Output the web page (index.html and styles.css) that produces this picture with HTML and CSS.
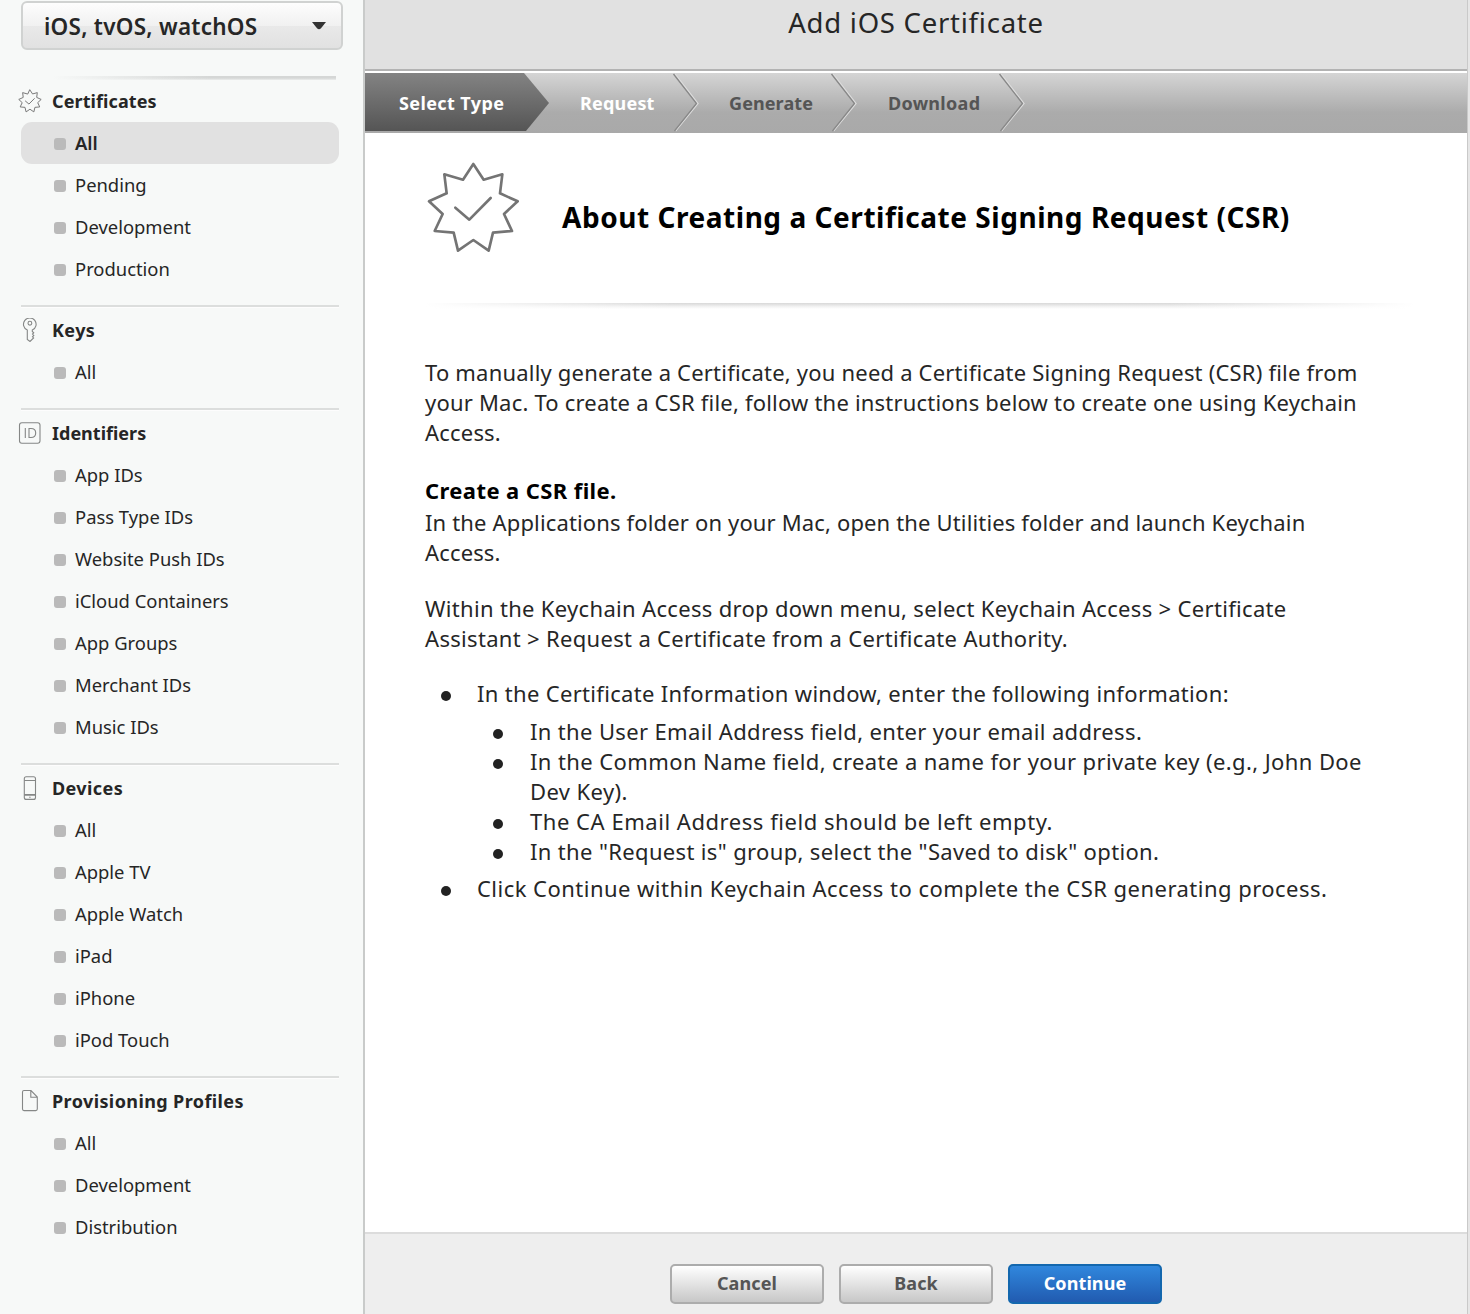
FILE: index.html
```
<!DOCTYPE html>
<html lang="en">
<head>
<meta charset="utf-8">
<title>Add iOS Certificate</title>
<link rel="stylesheet" href="styles.css">
</head>
<body>
<svg class="defs" aria-hidden="true">
  <symbol id="seal" viewBox="48 36 285 273">
    <path class="seal-line" d="M190 42L221 89L277 73L270 130L323 154L282 192L306 243L249 248L236 302L190 270L144 302L131 248L74 243L98 192L57 154L110 130L103 73L159 89Z"/>
    <path class="seal-line" d="M136 173L178 209L242 144"/>
  </symbol>
</svg>
<div class="page">
  <aside class="sidebar">
    <div class="platform"><span class="platform-name">iOS, tvOS, watchOS</span><svg class="caret" viewBox="0 0 14 8"><path d="M0 0H14L9 6.2Q7 8.2 5 6.2Z"/></svg></div>
    <div class="fade-rule"></div>
    <section class="group">
      <h3><svg class="icon seal-small"><use href="#seal"/></svg><span>Certificates</span></h3>
      <ul><li class="selected"><span>All</span></li><li><span>Pending</span></li><li><span>Development</span></li><li><span>Production</span></li></ul>
    </section>
    <section class="group">
      <h3><svg class="icon" viewBox="0 0 24 24"><path d="M9.3 12.1A6.3 6.3 0 1 1 14.3 12.1V13.5L15.7 14.8L14.5 16.1L15.8 17.4L14.5 18.8L15.6 20L12 23.5L9.3 21.5Z"/><circle cx="11.9" cy="5.2" r="1.9"/></svg><span class="wide">Keys</span></h3>
      <ul><li><span>All</span></li></ul>
    </section>
    <section class="group">
      <h3><svg class="icon" viewBox="0 0 24 24"><rect x="1.5" y="1.7" width="20.5" height="20.5" rx="2.4"/><path d="M7.3 7V17M11 7.5V16.5H13Q17.7 16.5 17.7 12Q17.7 7.5 13 7.5Z"/></svg><span class="tight">Identifiers</span></h3>
      <ul><li><span>App IDs</span></li><li><span>Pass Type IDs</span></li><li><span>Website Push IDs</span></li><li><span>iCloud Containers</span></li><li><span>App Groups</span></li><li><span>Merchant IDs</span></li><li><span>Music IDs</span></li></ul>
    </section>
    <section class="group">
      <h3><svg class="icon" viewBox="0 0 24 24"><rect x="6.3" y=".7" width="11.2" height="22.7" rx="2"/><path d="M6.3 4.5H17.5M6.3 18.5H17.5M6.3 19.2H17.5"/><circle class="dot" cx="11.9" cy="21.3" r=".8"/></svg><span class="wide">Devices</span></h3>
      <ul><li><span>All</span></li><li><span>Apple TV</span></li><li><span>Apple Watch</span></li><li><span>iPad</span></li><li><span>iPhone</span></li><li><span>iPod Touch</span></li></ul>
    </section>
    <section class="group">
      <h3><svg class="icon" viewBox="0 0 24 24"><path d="M6 1.5H13L19.3 8V20Q19.3 21.6 17.7 21.6H6Q4.5 21.6 4.5 20V3Q4.5 1.5 6 1.5ZM12.8 1.5V8.2H19.3"/></svg><span class="wide">Provisioning Profiles</span></h3>
      <ul><li><span>All</span></li><li><span>Development</span></li><li><span>Distribution</span></li></ul>
    </section>
  </aside>
  <main class="main">
    <header class="title"><span>Add iOS Certificate</span></header>
    <nav class="steps">
      <div class="step s1"><span>Select Type</span></div>
      <div class="step s2"><span>Request</span><svg class="chev" viewBox="0 0 28 60"><path class="lite" d="M4 1L27 30.5L4.5 58"/><path class="dark" d="M2.5 1L25.5 30.5L3.5 58"/></svg></div>
      <div class="step s3"><span>Generate</span><svg class="chev" viewBox="0 0 28 60"><path class="lite" d="M4 1L27 30.5L4.5 58"/><path class="dark" d="M2.5 1L25.5 30.5L3.5 58"/></svg></div>
      <div class="step s4"><span>Download</span><svg class="chev" viewBox="0 0 28 60"><path class="lite" d="M4 1L27 30.5L4.5 58"/><path class="dark" d="M2.5 1L25.5 30.5L3.5 58"/></svg></div>
    </nav>
    <article class="content">
      <div class="about"><svg class="seal-big"><use href="#seal"/></svg><h1>About Creating a Certificate Signing Request (CSR)</h1></div>
      <div class="rule"></div>
      <p class="t20">To manually generate a Certificate, you need a Certificate Signing Request (CSR) file from<br>your Mac. To create a CSR file, follow the instructions below to create one using Keychain<br>Access.</p>
      <h2>Create a CSR file.</h2>
      <p class="after-head t15">In the Applications folder on your Mac, open the Utilities folder and launch Keychain<br>Access.</p>
      <p class="menu-path t30">Within the Keychain Access drop down menu, select Keychain Access &gt; Certificate<br>Assistant &gt; Request a Certificate from a Certificate Authority.</p>
      <ul class="outer">
        <li><span class="t30">In the Certificate Information window, enter the following information:</span>
          <ul class="inner">
            <li class="t35">In the User Email Address field, enter your email address.</li>
            <li class="t40">In the Common Name field, create a name for your private key (e.g., John Doe<br>Dev Key).</li>
            <li class="t50">The CA Email Address field should be left empty.</li>
            <li class="t35">In the "Request is" group, select the "Saved to disk" option.</li>
          </ul>
        </li>
        <li class="t45">Click Continue within Keychain Access to complete the CSR generating process.</li>
      </ul>
    </article>
    <footer class="footer"><button>Cancel</button><button>Back</button><button class="primary">Continue</button></footer>
  </main>
</div>
</body>
</html>
```
FILE: styles.css
```
* { box-sizing: border-box; }
body { margin: 0; font-family: "Noto Sans", "Open Sans", sans-serif; color: #262626; background: #e6e6e6; }
h1, h2, h3, p, ul { margin: 0; padding: 0; }
ul { list-style: none; }
.defs { display: none; }
.page { display: flex; width: 1470px; height: 1314px; overflow: hidden; }

.sidebar { width: 365px; flex: none; padding: 1px 0 0 21px; background: #f7f9f8; border-right: 2px solid #c9cbca; }
.platform { display: flex; align-items: center; justify-content: space-between; width: 322px; height: 49px; padding: 1px 15px 0 21px; border: 2px solid #d0d2d1; border-radius: 6px; background: linear-gradient(#fdfdfd, #f1f1f1 50%, #e9e9e9 51%, #e1e1e1); font-size: 22.5px; font-weight: 600; letter-spacing: .25px; }
.caret { width: 14px; height: 8px; fill: #333; }
.fade-rule { width: 315px; height: 4px; margin: 26px 0 0; background: linear-gradient(90deg, #f7f9f8 10%, transparent 60%), linear-gradient(#d5d7d6 50%, #eceeed); }
.group h3 { display: flex; align-items: center; gap: 10px; height: 42px; margin-left: -3px; font-size: 18px; font-weight: 700; letter-spacing: .1px; }
.group h3 .wide { letter-spacing: .4px; }
.group h3 .tight { letter-spacing: 0; }
.group + .group { margin-top: 15px; }
.group + .group::before { content: ""; display: block; width: 318px; height: 2px; margin-bottom: 2px; background: #dcdedd; box-shadow: 0 1px #fdfdfd; }
.icon { width: 24px; height: 24px; fill: none; stroke: #858786; stroke-width: 1.1; }
.icon .dot { fill: #999; stroke: none; }
.seal-line { fill: none; stroke: #747474; stroke-linejoin: round; stroke-linecap: round; }
.seal-small { stroke-width: 11.5; }
.group li { display: flex; align-items: center; gap: 9px; width: 318px; height: 42px; padding: 0 0 2px 33px; font-size: 18.4px; }
.group li::before { content: ""; width: 12px; height: 12px; margin-top: 4px; border-radius: 3px; background: #bababa; }
.group .selected { border-radius: 11px; background: #e1e1e1; font-weight: 600; }

.main { display: flex; flex-direction: column; width: 1103px; border-right: 1px solid #c9c9c9; background: #fff; }
.title { flex: none; height: 71px; border-bottom: 2px solid #b3b3b3; background: #e1e1e1; text-align: center; font-size: 27.5px; line-height: 45px; letter-spacing: .75px; }
.steps { display: flex; flex: none; height: 60px; margin-top: 2px; background: linear-gradient(#d5d5d5, #ababab 66%, #a9a9a9); font-size: 18px; font-weight: 700; letter-spacing: .3px; color: #555; }
.step { display: flex; align-items: center; justify-content: space-between; }
.s1 { width: 184px; height: 58px; padding: 1px 0 0 34px; background: linear-gradient(#838383, #555); clip-path: polygon(0 0, 159px 0, 184px 30px, 161px 100%, 0 100%); color: #fff; letter-spacing: .4px; }
.s2 { width: 150px; padding-left: 31px; color: #fff; letter-spacing: .2px; }
.s3 { width: 158px; padding-left: 30px; letter-spacing: .1px; }
.s4 { width: 168px; padding-left: 31px; }
.chev { width: 28px; height: 60px; flex: none; fill: none; }
.lite { stroke: #ddd; stroke-width: 1.3; }
.dark { stroke: #888; stroke-width: 1.3; }

.content { flex: 1; padding: 29px 0 0 60px; font-size: 22px; line-height: 30px; }
.about { display: flex; gap: 41px; }
.seal-big { width: 95px; height: 91px; margin-left: 1px; stroke-width: 8; }
h1 { padding-top: 35px; font-size: 28px; line-height: 40px; font-weight: 700; letter-spacing: .54px; color: #000; white-space: nowrap; }
.rule { width: 990px; height: 6px; margin: 50px 0 48px; background: linear-gradient(90deg, #fff, transparent 25% 75%, #fff), linear-gradient(#d8d8d8, #f2f2f2 60%, #fff); }
.content p { white-space: nowrap; }
h2 { margin-top: 28px; font-size: 22px; line-height: 30px; letter-spacing: .4px; color: #000; }
.after-head { margin-top: 2px; }
.menu-path { margin-top: 26px; }
.outer { margin-top: 25px; }
.outer li { position: relative; white-space: nowrap; }
.outer > li { padding-left: 52px; }
.inner { margin: 8px 0 7px; }
.inner li { padding-left: 53px; }
.outer li::before { content: ""; position: absolute; top: 13px; left: 16px; width: 10px; height: 10px; border-radius: 50%; background: #222; }
.t15 { letter-spacing: .15px; }
.t20 { letter-spacing: .2px; }
.t30 { letter-spacing: .32px; }
.t35 { letter-spacing: .35px; }
.t40 { letter-spacing: .4px; }
.t45 { letter-spacing: .47px; }
.t50 { letter-spacing: .54px; }

.footer { display: flex; gap: 15px; flex: none; height: 82px; padding: 30px 0 0 305px; border-top: 2px solid #dcdcdc; background: #eee; }
button { width: 154px; height: 40px; padding: 0 0 2px; border: 2px solid #acacac; border-radius: 5px; background: linear-gradient(#fff, #c7c7c7); color: #555; font: 700 18px "Noto Sans", sans-serif; letter-spacing: .1px; }
.primary { border-color: #1367ae; background: linear-gradient(#3087dd, #215bb0); color: #fff; }
```
